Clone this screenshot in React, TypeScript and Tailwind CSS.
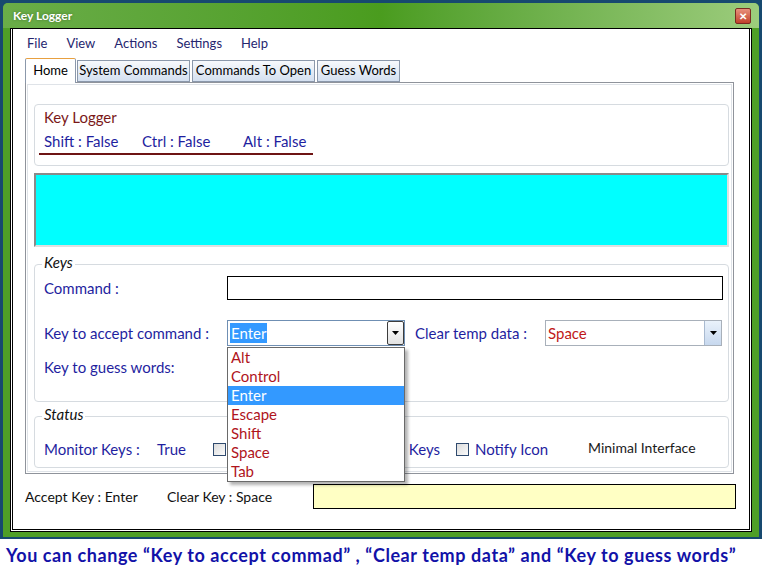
import React from "react";

const blue = "text-[#1f1f9f]";

const Checkbox = () => (
  <span className="inline-block h-[13px] w-[13px] border border-[#2f4a6e] bg-gradient-to-br from-[#dcdcdc] to-[#fbfbfb]" />
);

const DropArrow = ({ dark }: { dark?: boolean }) => (
  <div
    className={`flex h-full w-[17px] items-center justify-center border-l ${
      dark
        ? "rounded-[2px] border border-[#3c3c3c] bg-gradient-to-b from-[#ffffff] to-[#e2e2e2]"
        : "border-[#a9bad0] bg-gradient-to-b from-[#eaf2fb] to-[#c7d8ee]"
    }`}
  >
    <svg width="7" height="4" viewBox="0 0 7 4">
      <path d="M0 0h7L3.5 4z" fill="#000" />
    </svg>
  </div>
);

const options = ["Alt", "Control", "Enter", "Escape", "Shift", "Space", "Tab"];

export default function App() {
  return (
    <div className="relative h-[581px] w-[762px] overflow-hidden bg-white font-['Lato',sans-serif]">
      {/* desktop strip */}
      <div className="bg-[#17496f] px-[3px] pt-[3px] pb-[2px]">
        {/* window */}
        <div className="rounded-t-[5px] bg-[#4f9f27] pb-[5px]">
          <div className="flex h-[25px] items-center justify-between rounded-t-[5px] bg-gradient-to-r from-[#6aad48] via-[#4a9c1e] to-[#9ccc7c] pl-[10px] pr-[8px]">
            <span className="text-[12px] font-bold text-white [text-shadow:0_0_3px_rgba(0,0,0,0.35)]">
              Key Logger
            </span>
            <div className="flex h-[16px] w-[16px] items-center justify-center rounded-[2px] border border-[#7a2a20] bg-gradient-to-b from-[#e8907c] to-[#c0402a] text-[10px] font-bold leading-none text-white">
              ✕
            </div>
          </div>

          {/* client */}
          <div className="mx-[7px] border border-black bg-white p-[1px] pt-0">
            <div className="h-[501px] border border-t-0 border-black bg-white px-[12px] pt-[4px]">
              {/* menu */}
              <div className="flex h-[22px] items-center gap-[19px] pl-[2px] text-[13px] text-[#26266f]">
                <span>File</span>
                <span>View</span>
                <span>Actions</span>
                <span>Settings</span>
                <span>Help</span>
              </div>

              {/* tabs */}
              <div className="mt-[2px] flex h-[25px] items-end text-[13px] text-black">
                <div className="relative z-10 -mb-px flex h-[25px] w-[51px] items-center justify-center rounded-t-[2px] border border-b-0 border-[#8b98ab] border-t-[#e8a040] bg-white">
                  Home
                </div>
                <div className="ml-[1px] flex h-[22px] w-[113px] items-center justify-center border border-[#8b98ab] bg-gradient-to-b from-[#f7f9fc] to-[#d4e0f0]">
                  System Commands
                </div>
                <div className="ml-[2px] flex h-[22px] w-[123px] items-center justify-center border border-[#8b98ab] bg-gradient-to-b from-[#f7f9fc] to-[#d4e0f0]">
                  Commands To Open
                </div>
                <div className="ml-[2px] flex h-[22px] w-[83px] items-center justify-center border border-[#8b98ab] bg-gradient-to-b from-[#f7f9fc] to-[#d4e0f0]">
                  Guess Words
                </div>
              </div>

              {/* tab page */}
              <div className="h-[392px] w-[709px] border border-[#8f939b] bg-white p-[1px]">
                <div className="h-full border border-[#dfe3e8] px-[6px] pt-[19px]">
                  {/* key logger group */}
                  <div className="h-[62px] w-[695px] rounded-[4px] border border-[#d6dbe0] pl-[9px] pt-[1px]">
                    <div className="text-[15px] leading-[23px] text-[#7a1818]">Key Logger</div>
                    <div className={`-ml-[5px] flex w-[274px] border-b-2 border-[#6e1414] pl-[5px] text-[15px] leading-[24px] ${blue}`}>
                      <span className="w-[98px]">Shift : False</span>
                      <span className="w-[101px]">Ctrl : False</span>
                      <span>Alt : False</span>
                    </div>
                  </div>

                  {/* cyan output */}
                  <div className="mt-[7px] h-[74px] w-[695px] border-2 border-[#8a8a8a] border-b-[#e0e0e0] border-r-[#e0e0e0] bg-[#00ffff]" />

                  {/* keys group */}
                  <div className="relative mt-[17px] h-[138px] w-[695px] rounded-[4px] border border-[#d6dbe0] pl-[9px] pr-[5px]">
                    <span className="absolute -top-[12px] left-[7px] bg-white px-[2px] text-[15px] italic leading-[18px] text-[#111]">
                      Keys
                    </span>
                    <div className="mt-[11px] flex h-[24px] items-center">
                      <span className={`w-[183px] text-[15px] ${blue}`}>Command :</span>
                      <div className="h-[24px] w-[497px] border border-black bg-white" />
                    </div>
                    <div className="mt-[20px] flex h-[26px] items-center">
                      <span className={`w-[183px] text-[15px] ${blue}`}>Key to accept command :</span>
                      <div className="relative flex h-[26px] w-[178px] border border-[#6f8fb3] bg-white">
                        <div className="flex flex-1 items-center pl-[2px]">
                          <span className="bg-[#3399ff] px-[1px] text-[15px] leading-[20px] text-white">Enter</span>
                        </div>
                        <DropArrow dark />
                        {/* open list */}
                        <div className="absolute left-[-1px] top-[26px] z-20 w-[178px] border border-[#6a6a6a] bg-white shadow-[3px_3px_3px_rgba(0,0,0,0.3)]">
                          {options.map((o) => (
                            <div
                              key={o}
                              className={`h-[19px] pl-[3px] text-[15px] leading-[19px] ${
                                o === "Enter" ? "bg-[#3399ff] text-white" : "text-[#b0141c]"
                              }`}
                            >
                              {o}
                            </div>
                          ))}
                        </div>
                      </div>
                      <span className={`ml-[10px] w-[130px] text-[15px] ${blue}`}>Clear temp data :</span>
                      <div className="flex h-[26px] w-[177px] border border-[#a8b0ba] bg-white">
                        <div className="flex flex-1 items-center pl-[2px] text-[15px] text-[#c01818]">Space</div>
                        <DropArrow />
                      </div>
                    </div>
                    <div className="mt-[10px] flex h-[22px] items-center">
                      <span className={`text-[15px] ${blue}`}>Key to guess words:</span>
                    </div>
                  </div>

                  {/* status group */}
                  <div className="relative mt-[14px] h-[52px] w-[695px] rounded-[4px] border border-[#d6dbe0] pl-[9px]">
                    <span className="absolute -top-[12px] left-[7px] bg-white px-[2px] text-[15px] italic leading-[18px] text-[#111]">
                      Status
                    </span>
                    <div className={`mt-[21px] flex items-center text-[15px] ${blue}`}>
                      <span className="w-[113px]">Monitor Keys :</span>
                      <span className="w-[56px]">True</span>
                      <Checkbox />
                      <span className="ml-[7px] w-[207px] text-right">Capture Keys</span>
                      <span className="ml-[16px] flex"><Checkbox /></span>
                      <span className="ml-[6px] w-[113px]">Notify Icon</span>
                      <span className="-mt-[4px] text-[14px] text-[#1a1a1a]">Minimal Interface</span>
                    </div>
                  </div>
                </div>
              </div>

              {/* bottom status */}
              <div className="mt-[10px] flex h-[25px] items-center text-[14px] text-[#111]">
                <span className="w-[142px]">Accept Key : Enter</span>
                <span className="w-[146px]">Clear Key : Space</span>
                <div className="h-[25px] w-[423px] border border-black bg-[#ffffc4]" />
              </div>
            </div>
          </div>
        </div>
      </div>

      {/* caption */}
      <div className="mt-[3px] pl-[6px] text-[18px] font-bold tracking-[0.58px] text-[#1212a8]">
        You can change “Key to accept commad” , “Clear temp data” and “Key to guess words”
      </div>
    </div>
  );
}
